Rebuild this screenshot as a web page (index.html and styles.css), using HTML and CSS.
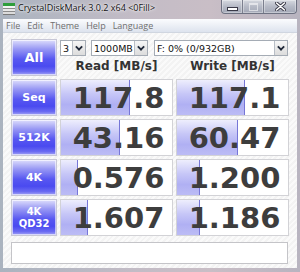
FILE: index.html
```html
<!DOCTYPE html>
<html>
<head>
    <title>CrystalDiskMark 3.0.2 x64</title>
    <link rel="stylesheet" href="styles.css">
</head>
<body>
<div class="window">
    <div class="titlebar">
        <svg class="app-icon" width="12" height="12" viewBox="0 0 12 12">
            <rect x="0" y="0" width="12" height="3" fill="#2f9e3c"/>
            <rect x="0" y="3" width="12" height="2" fill="#f4f4f4"/>
            <rect x="0" y="5" width="12" height="1" fill="#8a8a8a"/>
            <rect x="0" y="6" width="12" height="2" fill="#e8e8e8"/>
            <rect x="0" y="8" width="12" height="1" fill="#8a8a8a"/>
            <rect x="0" y="9" width="12" height="2" fill="#dcdcdc"/>
            <rect x="0" y="11" width="12" height="1" fill="#7a7a7a"/>
        </svg>
        <span class="title">CrystalDiskMark 3.0.2 x64 &lt;0Fill&gt;</span>
        <div class="caption-buttons">
            <span class="cap cap-min"><i></i></span>
            <span class="cap cap-max"><i></i></span>
            <span class="cap cap-close">
                <svg width="11" height="9" viewBox="0 0 11 9">
                    <path d="M1.5 1 L9.5 8 M9.5 1 L1.5 8" stroke="#3a3a48" stroke-width="3.4" stroke-linecap="round"/>
                    <path d="M1.5 1 L9.5 8 M9.5 1 L1.5 8" stroke="#fff" stroke-width="1.6" stroke-linecap="round"/>
                </svg>
            </span>
        </div>
    </div>

    <div class="frame">
        <div class="menubar">
            <span>File</span>
            <span>Edit</span>
            <span>Theme</span>
            <span>Help</span>
            <span>Language</span>
        </div>

        <div class="client">
            <div class="board">
                <div class="btn btn-all">All</div>
                <div class="head">
                    <div class="combos">
                        <div class="combo combo-count"><span>3</span><b></b></div>
                        <div class="combo combo-size"><span>1000MB</span><b></b></div>
                        <div class="combo combo-drive"><span>F: 0% (0/932GB)</span><b></b></div>
                    </div>
                    <div class="labels">
                        <span>Read [MB/s]</span>
                        <span>Write [MB/s]</span>
                    </div>
                </div>

                <div class="btn">Seq</div>
                <div class="cell" style="--w:69px">117.8</div>
                <div class="cell" style="--w:68px">117.1</div>

                <div class="btn">512K</div>
                <div class="cell" style="--w:59px">43.16</div>
                <div class="cell" style="--w:61px">60.47</div>

                <div class="btn">4K</div>
                <div class="cell" style="--w:17px">0.576</div>
                <div class="cell" style="--w:23px">1.200</div>

                <div class="btn btn-two">4K<br>QD32</div>
                <div class="cell" style="--w:27px">1.607</div>
                <div class="cell" style="--w:23px">1.186</div>
            </div>
            <div class="comment"></div>
        </div>
    </div>
</div>
</body>
</html>
```

FILE: styles.css
```css
body {
    margin: 0;
    width: 300px;
    height: 272px;
    overflow: hidden;
    background: #7d8593;
}

.window {
    width: 300px;
    height: 272px;
    display: flex;
    flex-direction: column;
    background: linear-gradient(90deg, #aab3bf 0%, #c3bcc6 45%, #c9bec6 70%, #b8b4c0 100%);
}

/* title bar */

.titlebar {
    height: 19px;
    display: flex;
    align-items: flex-start;
    position: relative;
}

.app-icon {
    margin: 3px 0 0 3px;
}

.title {
    margin: 2px 0 0 3px;
    font-family: "Open Sans", "Noto Sans", sans-serif;
    font-size: 9px;
    line-height: 12px;
    color: #111;
    text-shadow: 0 0 4px #fff, 0 0 2px #fff;
}

.caption-buttons {
    margin-left: auto;
    margin-right: 3px;
    display: flex;
    height: 13px;
    border: 1px solid #6e7282;
    border-top: none;
    border-radius: 0 0 4px 4px;
    overflow: hidden;
    background: linear-gradient(#d6d9e0, #b6bac6 50%, #a3a8b6);
}

.cap {
    display: flex;
    align-items: center;
    justify-content: center;
    width: 20px;
    border-right: 1px solid #7b7f8e;
    box-shadow: inset 0 0 0 1px rgba(255, 255, 255, 0.35);
}

.cap-close {
    width: 32px;
    border-right: none;
}

.cap-min i {
    display: block;
    width: 9px;
    height: 2px;
    margin-top: 4px;
    background: #fff;
    border: 1px solid #3a3a48;
}

.cap-max i {
    display: block;
    width: 7px;
    height: 5px;
    border: 1px solid rgba(255, 255, 255, 0.55);
    border-top-width: 2px;
}

/* frame */

.frame {
    flex: 1;
    display: flex;
    flex-direction: column;
    padding: 0 3px 4px 3px;
}

.menubar {
    height: 13px;
    display: flex;
    align-items: center;
    gap: 7px;
    padding-left: 3px;
    background: linear-gradient(#fbfcfe, #e9edf4 60%, #dde3ee);
    border-bottom: 1px solid #d0d6e0;
    font-family: "Open Sans", "Noto Sans", sans-serif;
    font-size: 9px;
    color: #6f6f6f;
}

.client {
    flex: 1;
    padding: 6px 0 0 8px;
    background: repeating-linear-gradient(135deg, #f3f3f3 0, #f3f3f3 2px, #fafafa 2px, #fafafa 4px);
}

/* board */

.board {
    display: grid;
    grid-template-columns: 46px 113px 113px;
    grid-template-rows: repeat(5, 37px);
    gap: 3px;
}

.btn {
    display: flex;
    align-items: center;
    justify-content: center;
    text-align: center;
    border: 1px solid #c7c7d6;
    box-shadow: inset 0 0 0 1px rgba(255, 255, 255, 0.6);
    background: linear-gradient(#dedefc 0%, #9a9af4 25%, #5757f1 55%, #4a4af0 75%, #6a6af2 90%, #a4a4f6 100%);
    font-family: "DejaVu Sans", Verdana, sans-serif;
    font-weight: bold;
    font-size: 11px;
    line-height: 12px;
    color: #fff;
}

.btn-all {
    font-size: 13px;
}

.btn-two {
    font-size: 10px;
    line-height: 12px;
}

.head {
    grid-column: 2 / 4;
    display: flex;
    flex-direction: column;
}

.combos {
    display: flex;
    margin-top: 1px;
}

.combo {
    height: 16px;
    box-sizing: border-box;
    display: flex;
    align-items: center;
    border: 1px solid #a5acb5;
    background: #fff;
    font-family: "DejaVu Sans", Verdana, sans-serif;
    font-size: 9.5px;
    color: #111;
}

.combo span {
    flex: 1;
    padding-left: 2px;
    white-space: nowrap;
}

.combo b {
    width: 13px;
    height: 14px;
    box-sizing: border-box;
    border-left: 1px solid #b8bec6;
    background: linear-gradient(#f6f6f6, #dcdcdc) ;
    position: relative;
}

.combo b::after {
    content: "";
    position: absolute;
    left: 3px;
    top: 3px;
    width: 4px;
    height: 4px;
    border-right: 2px solid #1f2838;
    border-bottom: 2px solid #1f2838;
    transform: rotate(45deg) scale(0.9);
}

.combo-count {
    width: 26px;
}

.combo-size {
    width: 57px;
    margin-left: 5px;
}

.combo-drive {
    width: 134px;
    margin-left: 6px;
}

.labels {
    flex: 1;
    display: grid;
    grid-template-columns: 113px 113px;
    gap: 3px;
    align-items: center;
    text-align: center;
    font-family: "DejaVu Sans", Verdana, sans-serif;
    font-weight: bold;
    font-size: 12px;
    color: #333;
}

.cell {
    display: flex;
    align-items: center;
    justify-content: center;
    border: 1px solid #d2d2d6;
    background:
        linear-gradient(90deg, transparent calc(100% - 1px), #7676d6 0) no-repeat 0 0 / var(--w) 100%,
        linear-gradient(#eeeefd 0%, #c6c6f7 40%, #b0b0f3 70%, #bcbcf5 100%) no-repeat 0 0 / var(--w) 100%,
        #fff;
    font-family: "DejaVu Sans", Verdana, sans-serif;
    font-weight: bold;
    font-size: 29px;
    color: #3d3d3d;
    padding-left: 4px;
}

.comment {
    width: 277px;
    height: 22px;
    box-sizing: border-box;
    margin-top: 6px;
    border: 1px solid #c4c4c8;
    background: #fff;
}
```
